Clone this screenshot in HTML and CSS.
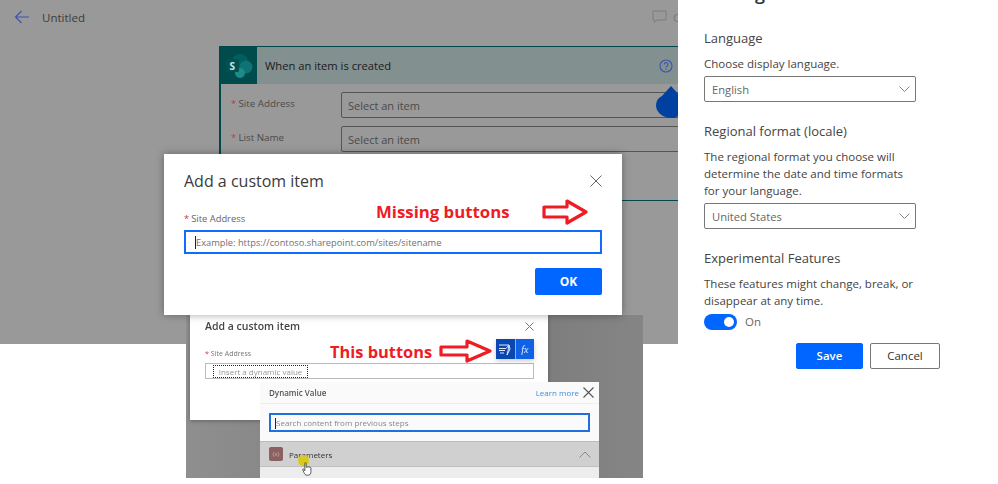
FILE: index.html
```html
<!DOCTYPE html>
<html lang="en">

<head>
    <meta charset="UTF-8">
    <meta name="viewport" content="width=device-width, initial-scale=1.0">
    <title>Add a custom item</title>
    <link rel="stylesheet" href="styles.css">
</head>

<body>
    <div class="shot">
        <!-- Left side: flow editor with the dialog on top -->
        <div class="editor">
            <div class="backdrop">
                <div class="topbar">
                    <svg class="back-icon" width="16" height="14" viewBox="0 0 16 14">
                        <path d="M15 7H1.500M7.500 1L1.500 7l6 6" fill="none" stroke="#3f51b0" stroke-width="1.100" />
                    </svg>
                    <span class="flow-name">Untitled</span>
                    <svg class="comment-icon" width="15" height="14" viewBox="0 0 15 14">
                        <path d="M1 1h13v9H5l-2.500 2.500V10H1z" fill="none" stroke="#7d7d7d" stroke-width="1" />
                    </svg>
                    <span class="comments">Comments</span>
                </div>

                <div class="card">
                    <div class="card-head">
                        <div class="card-logo">
                            <svg width="28" height="26" viewBox="0 0 28 26">
                                <circle cx="15" cy="9" r="8" fill="#025f60" />
                                <circle cx="21" cy="14" r="6.500" fill="#0e7375" />
                                <circle cx="15" cy="20" r="5" fill="#1f8a8a" />
                                <rect x="1" y="6" width="13" height="13" rx="1.500" fill="#035052" />
                                <text x="4.500" y="16.500" class="logo-letter">S</text>
                            </svg>
                        </div>
                        <span class="card-title">When an item is created</span>
                        <svg class="help-icon" width="14" height="14" viewBox="0 0 14 14">
                            <circle cx="7" cy="7" r="6" fill="none" stroke="#3b55ad" stroke-width="1.100" />
                            <path d="M5.200 5.500a1.900 1.900 0 1 1 2.700 1.700c-.6.300-.9.600-.9 1.300" fill="none" stroke="#3b55ad" stroke-width="1.100" />
                            <circle cx="7" cy="10.300" r=".7" fill="#3b55ad" />
                        </svg>
                    </div>
                    <div class="card-row">
                        <span class="card-label"><i>*</i>Site Address</span>
                        <span class="card-input">Select an item</span>
                    </div>
                    <div class="card-row">
                        <span class="card-label"><i>*</i>List Name</span>
                        <span class="card-input">Select an item</span>
                    </div>
                </div>
                <svg class="drop" width="30" height="32" viewBox="0 0 30 32">
                    <path d="M15 0l9 10a13 13 0 0 1 4 9.500C28 27 22 32 15 32S0 27 0 19.500C0 15 2 12 6 10z" fill="#0040a0" />
                </svg>
            </div>

            <!-- Pasted second screenshot -->
            <div class="inset">
                <div class="inset-dialog">
                    <div class="inset-head">
                        <span class="inset-title">Add a custom item</span>
                        <svg width="9" height="9" viewBox="0 0 9 9">
                            <path d="M.5.5l8 8M8.500.5l-8 8" stroke="#777" stroke-width="1" />
                        </svg>
                    </div>
                    <div class="inset-label"><i>*</i>Site Address</div>
                    <div class="inset-input">
                        <span class="inset-chip">Insert a dynamic value</span>
                    </div>
                </div>

                <div class="dynamic">
                    <div class="dynamic-head">
                        <span class="dynamic-title">Dynamic Value</span>
                        <span class="learn-more">Learn more</span>
                        <svg width="11" height="11" viewBox="0 0 11 11">
                            <path d="M.5.500l10 10M10.500.500l-10 10" stroke="#555" stroke-width="1.100" />
                        </svg>
                    </div>
                    <div class="dynamic-search">
                        <div class="dynamic-field"><b class="caret caret-small"></b>Search content from previous steps</div>
                    </div>
                    <div class="dynamic-row">
                        <span class="param-icon">{x}</span>
                        <span class="param-name">Parameters</span>
                        <svg class="chevron-up" width="12" height="7" viewBox="0 0 12 7">
                            <path d="M.5 6.500L6 1l5.500 5.500" fill="none" stroke="#888" stroke-width="1" />
                        </svg>
                    </div>
                    <div class="dynamic-next"></div>
                </div>

                <div class="pointer">
                    <span class="pointer-glow"></span>
                    <svg class="pointer-hand" width="10" height="14" viewBox="0 0 11 16">
                        <path d="M3 1.500c0-1 1.500-1 1.500 0V6c1.500-.5 5-.8 5.500.8V11c0 2-1 4-2.500 4H5c-1.500 0-2-1-3-3L.7 9c-.4-1 .8-1.500 1.300-.6L3 10z" fill="#fff" stroke="#333" stroke-width=".9" />
                    </svg>
                </div>

                <div class="flow-buttons">
                    <span class="flow-btn flow-btn-dark">
                        <svg width="14" height="13" viewBox="0 0 14 13">
                            <path d="M1 2h10L8 5.500H1M1 7.500h6M2 10h4M11 2l1 4-3 6 1-4z" fill="none" stroke="#dfe8ff" stroke-width="1" />
                        </svg>
                    </span>
                    <span class="flow-btn"><em>fx</em></span>
                </div>
            </div>

            <!-- Main dialog -->
            <div class="dialog">
                <div class="dialog-head">
                    <span class="dialog-title">Add a custom item</span>
                    <svg width="12" height="12" viewBox="0 0 12 12">
                        <path d="M.5.500l11 11M11.500.500l-11 11" stroke="#666" stroke-width="1" />
                    </svg>
                </div>
                <div class="dialog-label"><i>*</i>Site Address</div>
                <div class="dialog-input"><b class="caret"></b>Example: https://contoso.sharepoint.com/sites/sitename</div>
                <div class="dialog-foot">
                    <span class="ok">OK</span>
                </div>
            </div>

            <!-- Red notes drawn on the screenshot -->
            <span class="note note-missing">Missing buttons</span>
            <svg class="arrow arrow-missing" width="46" height="26" viewBox="0 0 46 26">
                <path d="M2 8h23V2l19 11-19 11v-6H2z" fill="#fff" stroke="#ee1c25" stroke-width="3.200" stroke-linejoin="round" />
            </svg>
            <span class="note note-this">This buttons</span>
            <svg class="arrow arrow-this" width="53" height="24" viewBox="0 0 53 24">
                <path d="M2 8h26V2l23 10-23 10v-6H2z" fill="#fff" stroke="#ee1c25" stroke-width="3.200" stroke-linejoin="round" />
            </svg>
        </div>

        <!-- Right side: settings panel -->
        <aside class="settings">
            <h2 class="settings-title">Settings</h2>

            <h3>Language</h3>
            <p>Choose display language.</p>
            <div class="select">
                <span>English</span>
                <svg width="11" height="6" viewBox="0 0 11 6">
                    <path d="M.5.500l5 5 5-5" fill="none" stroke="#888" stroke-width="1" />
                </svg>
            </div>

            <h3>Regional format (locale)</h3>
            <p>The regional format you choose will determine the date and time formats for your language.</p>
            <div class="select">
                <span>United States</span>
                <svg width="11" height="6" viewBox="0 0 11 6">
                    <path d="M.5.500l5 5 5-5" fill="none" stroke="#888" stroke-width="1" />
                </svg>
            </div>

            <h3>Experimental Features</h3>
            <p>These features might change, break, or disappear at any time.</p>
            <div class="toggle-row">
                <span class="toggle"><span class="toggle-knob"></span></span>
                <span class="toggle-text">On</span>
            </div>

            <div class="actions">
                <span class="btn btn-primary">Save</span>
                <span class="btn">Cancel</span>
            </div>
        </aside>
    </div>
</body>

</html>
```

FILE: styles.css
```css
html,
body {
    margin: 0;
    padding: 0;
    background-color: #fff;
}

.shot {
    display: flex;
    width: 998px;
    height: 484px;
    overflow: hidden;
    font-family: "Open Sans", "Noto Sans", sans-serif;
    color: #333;
}

i {
    font-style: normal;
    color: #d9333f;
    margin-right: 2px;
}

/* Left side */
.editor {
    position: relative;
    flex: none;
    width: 678px;
    height: 484px;
    overflow: hidden;
    background-color: #fff;
}

.backdrop {
    position: relative;
    height: 344px;
    background-color: #999;
    overflow: hidden;
}

.topbar {
    display: flex;
    align-items: center;
    height: 34px;
    padding-left: 14px;
    font-size: 11.500px;
    box-sizing: border-box;
}

.topbar svg {
    flex: none;
}

.flow-name {
    flex: none;
    width: 610px;
    margin-left: 12px;
    color: #3c3c3c;
}

.comments {
    flex: none;
    margin-left: 6px;
    color: #777;
    white-space: nowrap;
}

.card {
    width: 500px;
    height: 155px;
    margin: 12px 0 0 219px;
    border: 1px solid #00494b;
    border-left-width: 2px;
    border-bottom-width: 1.500px;
    box-sizing: border-box;
}

.card-head {
    display: flex;
    align-items: center;
    height: 37px;
    background-color: #82908f;
}

.card-logo {
    display: flex;
    align-items: center;
    justify-content: center;
    width: 36px;
    height: 37px;
    background-color: #004b4c;
}

.logo-letter {
    font-size: 10px;
    font-weight: 700;
    fill: #c8e6e6;
}

.card-title {
    margin-left: 8px;
    width: 394px;
    font-size: 11.200px;
    color: #1b1b1b;
}

.card-row {
    display: flex;
    align-items: center;
    margin-top: 8px;
    height: 26px;
    font-size: 9.800px;
}

.card-row:first-of-type {
    margin-top: 9px;
}

.card-label {
    width: 120px;
    padding: 0 0 4px 10px;
    box-sizing: border-box;
    color: #4a4a4a;
}

.card-input {
    flex: 1;
    height: 26px;
    line-height: 25px;
    padding-left: 6px;
    border: 1px solid #555;
    border-radius: 2px;
    box-sizing: border-box;
    font-size: 11px;
    color: #4a4a4a;
}

.drop {
    position: absolute;
    top: 86px;
    left: 656px;
}

/* Main dialog */
.dialog {
    position: absolute;
    top: 154px;
    left: 164px;
    width: 458px;
    height: 161px;
    padding: 0 20px;
    box-sizing: border-box;
    background-color: #fff;
    box-shadow: 0 0 8px rgba(0, 0, 0, 0.35);
}

.dialog-head {
    display: flex;
    align-items: center;
    justify-content: space-between;
    height: 54px;
}

.dialog-title {
    font-size: 16px;
    font-weight: 500;
    color: #3a3a3a;
}

.dialog-label {
    margin-top: 4px;
    font-size: 9.400px;
    color: #666;
}

.dialog-input {
    display: flex;
    align-items: center;
    height: 24px;
    margin-top: 5px;
    padding-left: 9px;
    border: 2px solid #0f6cff;
    box-sizing: border-box;
    font-size: 9.300px;
    color: #707070;
    white-space: nowrap;
}

.caret {
    width: 1px;
    height: 13px;
    background-color: #222;
}

.caret-small {
    display: inline-block;
    height: 11px;
    vertical-align: middle;
}

.dialog-foot {
    display: flex;
    justify-content: flex-end;
    margin-top: 14px;
}

.ok {
    width: 67px;
    height: 27px;
    line-height: 27px;
    text-align: center;
    border-radius: 2px;
    background-color: #0066ff;
    color: #fff;
    font-size: 12px;
    font-weight: 700;
}

/* Pasted screenshot */
.inset {
    position: absolute;
    top: 315px;
    left: 186px;
    width: 457px;
    height: 163px;
    background: linear-gradient(90deg, #8f8f8f, #777 60%, #858585);
    filter: blur(0.4px);
}

.inset-dialog {
    width: 358px;
    height: 105px;
    margin-left: 4px;
    padding: 2px 14px 0 15px;
    box-sizing: border-box;
    background-color: #fff;
    box-shadow: 0 1px 4px rgba(0, 0, 0, 0.3);
}

.inset-head {
    display: flex;
    align-items: center;
    justify-content: space-between;
    height: 18px;
}

.inset-title {
    font-size: 10.500px;
    font-weight: 600;
    color: #444;
}

.inset-label {
    margin-top: 14px;
    font-size: 7px;
    color: #777;
}

.inset-input {
    height: 16px;
    margin-top: 5px;
    padding: 1px 0 0 7px;
    border: 1px solid #bbb;
    box-sizing: border-box;
}

.inset-chip {
    display: block;
    width: 95px;
    height: 13px;
    line-height: 12px;
    border: 1px dotted #222;
    box-sizing: border-box;
    text-align: center;
    font-size: 8px;
    color: #999;
    white-space: nowrap;
}

.dynamic {
    position: absolute;
    top: 67px;
    left: 74px;
    width: 339px;
    height: 96px;
    background-color: #fafafa;
}

.dynamic-head {
    display: flex;
    align-items: center;
    height: 21px;
    padding: 0 5px 0 9px;
    border-bottom: 1px solid #eee;
}

.dynamic-title {
    flex: 1;
    font-size: 8px;
    font-weight: 600;
    color: #555;
}

.learn-more {
    margin-right: 4px;
    font-size: 8px;
    color: #3b8ee8;
}

.dynamic-search {
    height: 37px;
    padding: 9px 9px 0;
    box-sizing: border-box;
}

.dynamic-field {
    height: 19px;
    line-height: 15px;
    padding-left: 4px;
    border: 2px solid #1f6fe0;
    box-sizing: border-box;
    font-size: 8px;
    color: #888;
}

.dynamic-row {
    display: flex;
    align-items: center;
    height: 26px;
    padding: 0 8px 0 9px;
    box-sizing: border-box;
    background-color: #d0d0d0;
    border-top: 1px solid #bbb;
    border-bottom: 1px solid #c0c0c0;
}

.param-icon {
    width: 14px;
    height: 14px;
    line-height: 14px;
    border-radius: 2px;
    background-color: #8a6060;
    text-align: center;
    font-size: 6px;
    color: #c9b0b0;
}

.param-name {
    flex: 1;
    margin-left: 6px;
    font-size: 8px;
    color: #333;
}

.dynamic-next {
    height: 11px;
    background-color: #ededed;
}

.pointer {
    position: absolute;
    top: 140px;
    left: 112px;
}

.pointer-glow {
    position: absolute;
    top: 0;
    left: 0;
    width: 11px;
    height: 11px;
    border-radius: 50%;
    background-color: #d9c91e;
}

.pointer-hand {
    position: absolute;
    top: 7px;
    left: 4px;
}

.flow-buttons {
    position: absolute;
    top: 24px;
    left: 310px;
    display: flex;
    width: 38px;
    height: 20px;
    box-shadow: 0 2px 5px rgba(0, 0, 0, 0.2);
}

.flow-btn {
    display: flex;
    flex: 1;
    align-items: center;
    justify-content: center;
    background-color: #0f62e6;
    color: #e6eeff;
    font-family: "Liberation Serif", serif;
    font-size: 10px;
}

.flow-btn-dark {
    background-color: #0a47b0;
    border-right: 1px solid #8fb0ea;
}

/* Red notes */
.note {
    position: absolute;
    color: #ee1c25;
    font-weight: 700;
    white-space: nowrap;
}

.note-missing {
    top: 200px;
    left: 376px;
    font-size: 16.800px;
}

.note-this {
    top: 340px;
    left: 330px;
    font-size: 16.400px;
}

.arrow {
    position: absolute;
}

.arrow-missing {
    top: 199px;
    left: 542px;
}

.arrow-this {
    top: 339px;
    left: 439px;
}

/* Settings panel */
.settings {
    flex: none;
    width: 320px;
    height: 484px;
    padding: 0 82px 0 26px;
    box-sizing: border-box;
    background-color: #fff;
    color: #444;
}

.settings-title {
    margin: -21px 0 0;
    height: 30px;
    line-height: 29px;
    font-size: 18px;
    font-weight: 600;
    color: #333;
}

.settings h3 {
    margin: 20px 0 0;
    line-height: 18px;
    font-size: 13px;
    font-weight: 500;
    color: #444;
}

.settings p {
    margin: 8px 0 4px;
    line-height: 17px;
    font-size: 11.500px;
    color: #444;
}

.select {
    display: flex;
    align-items: center;
    justify-content: space-between;
    width: 212px;
    height: 26px;
    padding: 0 5px 0 7px;
    border: 1px solid #777;
    border-radius: 2px;
    box-sizing: border-box;
    font-size: 11.200px;
    color: #666;
}

.toggle-row {
    display: flex;
    align-items: center;
    height: 17px;
}

.toggle {
    display: flex;
    align-items: center;
    justify-content: flex-end;
    width: 33px;
    height: 16px;
    padding-right: 3px;
    border-radius: 8px;
    box-sizing: border-box;
    background-color: #0066ff;
}

.toggle-knob {
    width: 10px;
    height: 10px;
    border-radius: 50%;
    background-color: #fff;
}

.toggle-text {
    margin-left: 8px;
    font-size: 11.500px;
    color: #666;
}

.actions {
    display: flex;
    gap: 7px;
    margin: 13px 0 0 92px;
    width: 150px;
}

.btn {
    flex: none;
    width: 70px;
    height: 26px;
    line-height: 24px;
    text-align: center;
    border: 1px solid #777;
    border-radius: 2px;
    box-sizing: border-box;
    font-size: 11.500px;
    font-weight: 500;
    color: #333;
}

.btn-primary {
    width: 67px;
    border-color: #0066ff;
    background-color: #0066ff;
    color: #fff;
    font-weight: 600;
}
```
